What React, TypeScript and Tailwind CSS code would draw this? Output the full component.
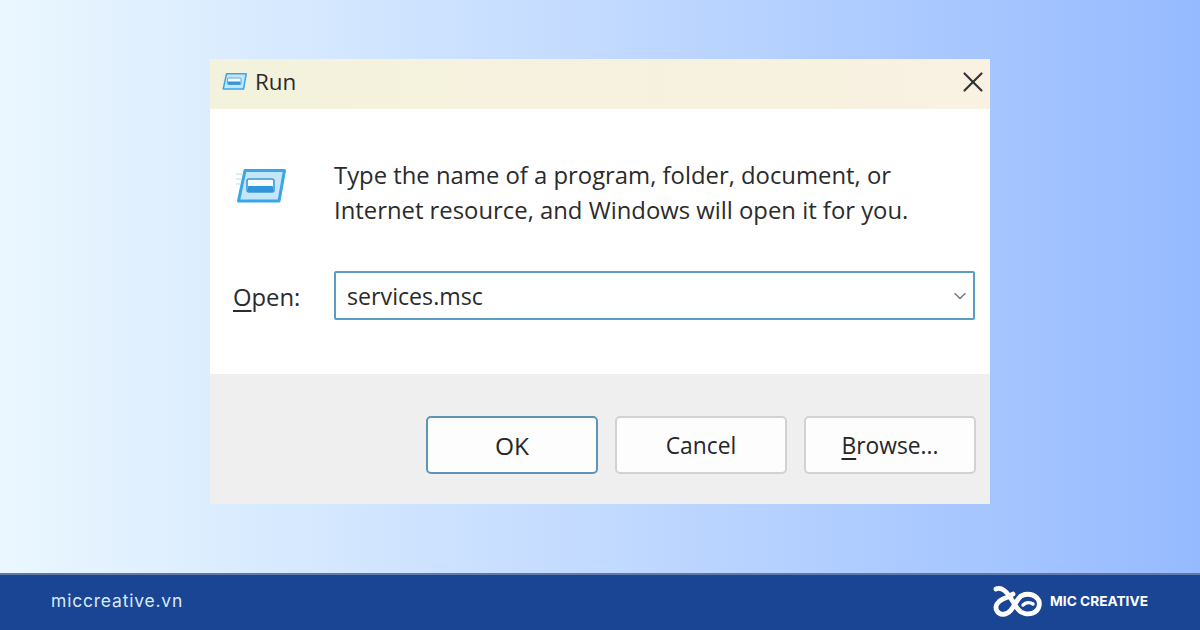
import { ChevronDown, X } from "lucide-react";

function RunIcon({ size }: { size: number }) {
  return (
    <svg width={size} height={size * 0.68} viewBox="0 0 50 34" fill="none">
      <path d="M9 1.5h39.5l-5.5 30.5H2.5z" fill="#c4e6fb" stroke="#3aa6e6" strokeWidth="3" strokeLinejoin="round" />
      <rect x="11" y="10" width="27" height="13" rx="2" fill="#f5fbff" stroke="#3d97d4" strokeWidth="1.6" />
      <rect x="12" y="17" width="25" height="6" rx="1" fill="#2f96dc" />
      <path d="M0 5h6M0 10h5M0 15h4" stroke="#d3edfb" strokeWidth="2" />
    </svg>
  );
}

function Logo() {
  return (
    <svg width="56" height="36" viewBox="0 0 56 36" fill="none">
      <path
        d="M6 5C11 3 16 7 20 13L27 24C31 30 38 31 43 29C50 26 51 18 47 14C42 9 33 9 29 14C26 18 24 22 21 26C17 31 10 32 7 27C4 22 8 17 13 15C17 13.5 20 12 23 10"
        stroke="white"
        strokeWidth="4.8"
        strokeLinecap="round"
      />
      <path d="M33 21C36 18 40 18 43 20" stroke="white" strokeWidth="3.4" strokeLinecap="round" />
    </svg>
  );
}

function DialogButton({ children, primary }: { children: React.ReactNode; primary?: boolean }) {
  return (
    <button
      className={`h-[58px] w-[172px] rounded-[5px] border-2 bg-[#fdfdfd] pt-[2px] text-[#262626] ${
        primary ? "border-[#5f94b5] text-[24.5px]" : "border-[#d2d2d2] text-[22.8px]"
      }`}
    >
      {children}
    </button>
  );
}

export default function App() {
  return (
    <div className="flex h-[630px] w-[1200px] flex-col overflow-hidden bg-gradient-to-r from-[#eaf7fe] via-[#c2daff] to-[#96baff] font-['Open_Sans',sans-serif]">
      {/* Dialog */}
      <main className="flex flex-1 justify-center pt-[59px]">
        <div className="flex h-[445px] w-[780px] flex-col">
          <div className="flex h-[50px] items-center justify-between bg-gradient-to-r from-[#f3f2dc] to-[#f9f1e2] pb-[5px] pl-[12px]">
            <div className="flex items-center gap-[8px]">
              <RunIcon size={25} />
              <span className="text-[22.4px] text-[#2b2b2b]">Run</span>
            </div>
            <X className="h-[34px] w-[34px] text-[#333333]" strokeWidth={1.5} />
          </div>

          <div className="flex h-[265px] flex-col bg-white">
            <div className="flex items-start pl-[26px] pt-[60px]">
              <RunIcon size={50} />
              <p className="-mt-[11px] ml-[48px] text-[23.85px] leading-[35px] text-[#2b2b2b]">
                Type the name of a program, folder, document, or
                <br />
                Internet resource, and Windows will open it for you.
              </p>
            </div>
            <div className="mt-[43px] flex items-center pl-[23px]">
              <span className="w-[101px] pt-[4px] text-[23.8px] text-[#2b2b2b]">
                <span className="underline underline-offset-4">O</span>pen:
              </span>
              <div className="flex h-[49px] w-[641px] items-center justify-between rounded-[2px] border-2 border-[#5b9cc4] pl-[11px] pr-[3px]">
                <span className="pt-[2px] text-[23.2px] text-[#2b2b2b]">services.msc</span>
                <ChevronDown className="h-[20px] w-[20px] text-[#707070]" strokeWidth={1.5} />
              </div>
            </div>
          </div>

          <div className="flex flex-1 items-start justify-end gap-[17px] bg-[#efefef] pr-[14px] pt-[42px]">
            <DialogButton primary>OK</DialogButton>
            <DialogButton>Cancel</DialogButton>
            <DialogButton>
              <span className="underline underline-offset-4">B</span>rowse...
            </DialogButton>
          </div>
        </div>
      </main>

      {/* Footer */}
      <footer className="flex h-[57px] items-center justify-between border-t-2 border-[#5f7aa8] bg-[#1a4494] pb-[2px] pl-[51px] pr-[52px]">
        <span className="font-['Inter',sans-serif] text-[17.5px] tracking-[0.8px] text-[#d9e9fb]">miccreative.vn</span>
        <div className="flex items-center gap-[4px]">
          <Logo />
          <span className="font-['Inter',sans-serif] text-[13.7px] font-bold text-white">MIC CREATIVE</span>
        </div>
      </footer>
    </div>
  );
}
